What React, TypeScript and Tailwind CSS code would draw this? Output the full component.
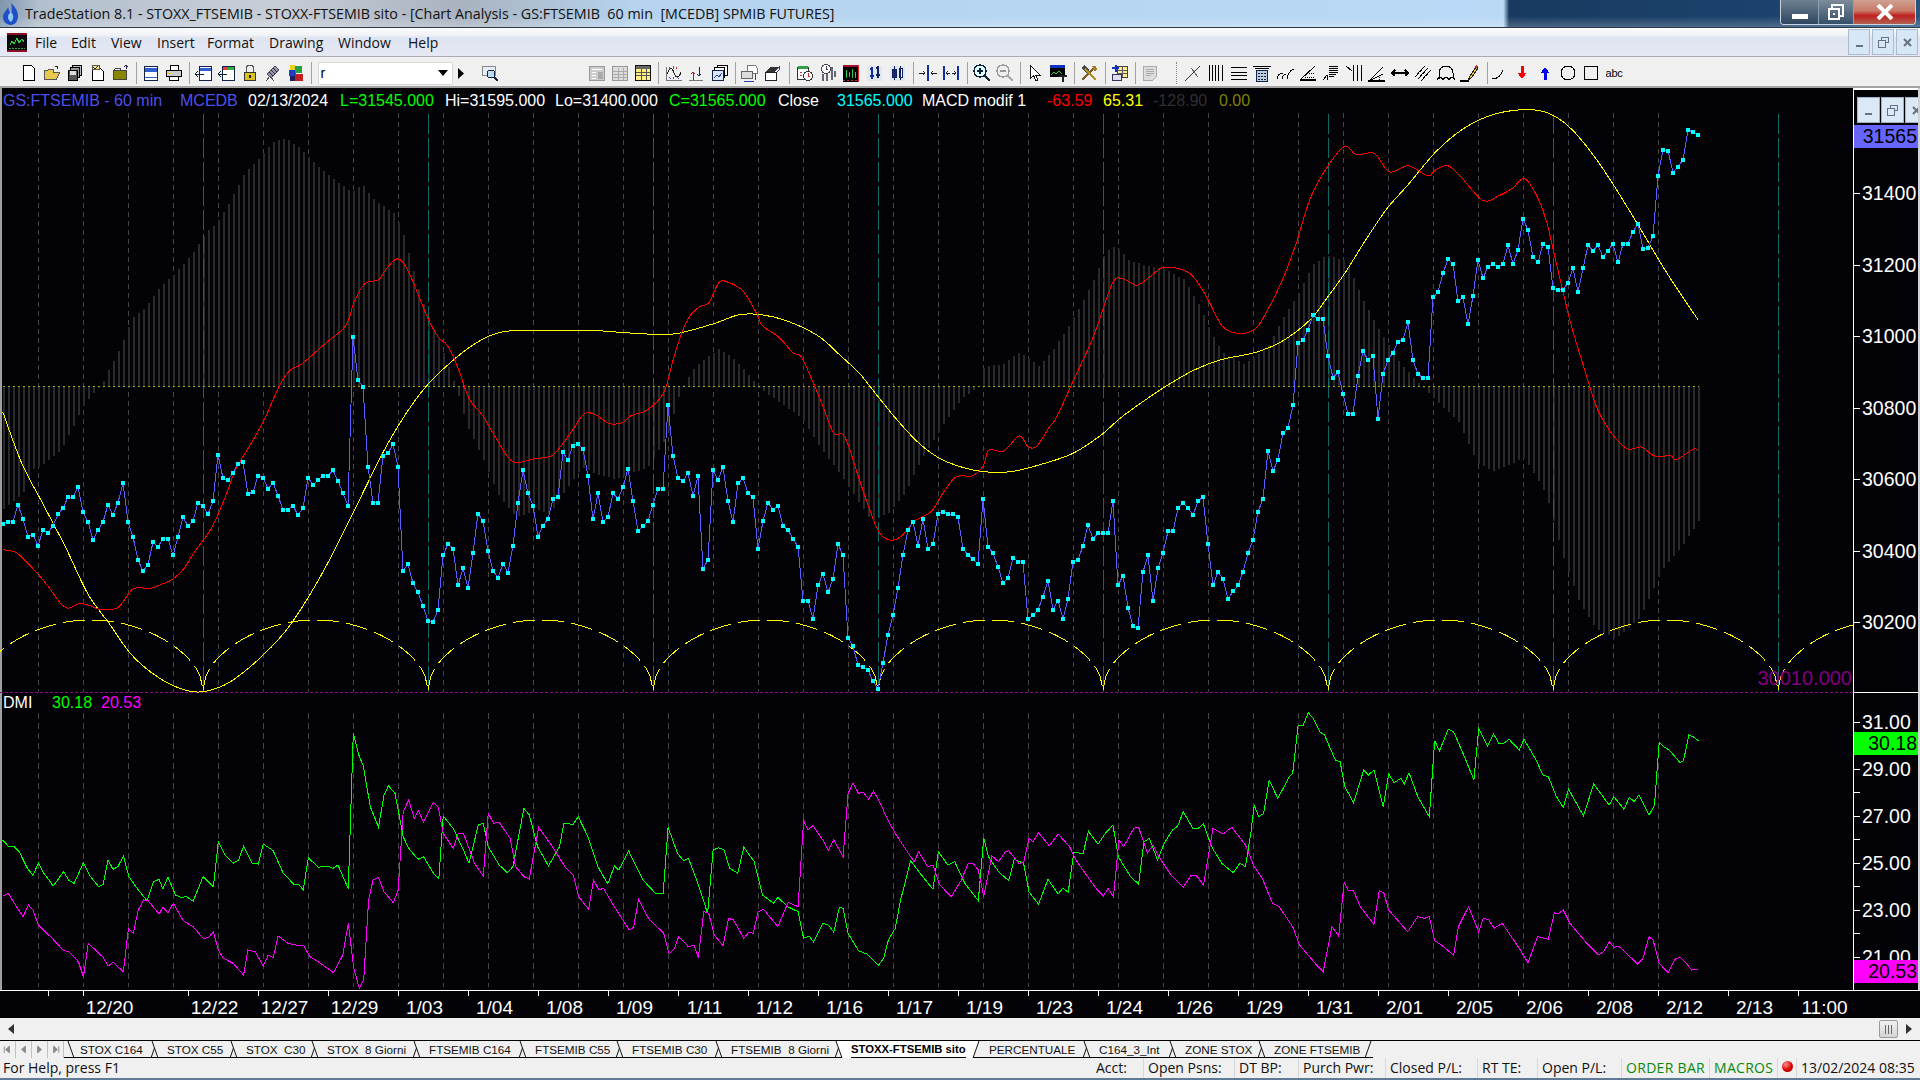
import React from 'react';

// flat [zoomX, zoomY, ...] readings -> real chart pixels
const map = (flat: number[], ox: number, sx: number, oy: number, sy: number) => {
  const out: [number, number][] = [];
  for (let i = 0; i < flat.length; i += 2) out.push([ox + flat[i] / sx, oy + flat[i + 1] / sy]);
  return out;
};
const A = (f: number[]) => map(f, 0, 1.823, 100, 2.613);
const B = (f: number[]) => map(f, 860, 1.823, 100, 2.613);
const C = (f: number[]) => map(f, 0, 1.823, 690, 3);
const D = (f: number[]) => map(f, 860, 1.479, 690, 3);

const priceY = [1107,1103,1102,1057,1095,1141,1136,1165,1124,1132,1112,1083,1066,1038,1037,1011,1076,1102,1150,1124,1103,1057,1084,1052,1000,1102,1141,1202,1231,1214,1155,1167,1146,1146,1190,1142,1090,1113,1100,1052,1061,1082,1048,927,988,993,975,950,946,1030,1024,983,987,1016,1000,1034,1071,1071,1060,1085,1066,987,1006,992,983,982,968,995,1028,1060,619,732,750,958,1052,1052,930,922,900,958,1231,1212,1263,1286,1322,1361,1364,1332,1190,1160,1172,1268,1224,1275,1183,1081,1100,1178,1230,1249,1212,1235,1165,1052,968,1028,1060,1141,1112,1095,1042,1037,921,940,903,899,912,983,1095,1028,1103,1090,1028,1042,1012,963,1048,1127,1112,1100,1057,1016,1016,798,930,988,995,975,1034,983,1225,1202,968,993,959,1048,1103,1002,988,1028,1038,1173,1100,1052,1071,1060,1112,1124,1146,1167,1308,1308,1356,1268,1238,1286,1252,1160,1190,1405,1427,1476,
  1482,1490,1518,1540,1471,1397,1346,1275,1188,1124,1102,1165,1095,1173,1160,1082,1076,1081,1083,1090,1173,1188,1200,1212,1042,1167,1184,1220,1262,1249,1196,1207,1207,1357,1346,1332,1298,1256,1332,1308,1356,1303,1207,1202,1165,1111,1146,1132,1132,1132,1047,1268,1243,1327,1375,1380,1233,1190,1310,1224,1183,1127,1127,1066,1052,1066,1085,1048,1038,1160,1268,1233,1252,1304,1284,1268,1233,1184,1150,1076,1042,916,970,940,870,856,798,636,627,600,562,572,572,670,726,712,768,820,820,722,655,680,670,833,716,680,660,632,626,581,680,716,726,726,516,502,452,416,428,525,516,586,512,418,465,436,428,436,428,380,428,392,310,340,410,424,376,384,492,496,496,478,440,502,440,380,394,380,410,394,376,424,376,376,344,324,390,386,356,198,130,132,190,174,156,78,84,91];
const price = priceY.map((y, i): [number, number] => [3 + 5 * i, 100 + y / 2.613]);

const red = [...A([5,1175,30,1183,50,1210,70,1240,90,1275,110,1315,125,1328,145,1316,165,1322,185,1332,215,1326,240,1280,255,1275,275,1276,295,1265,315,1252,335,1225,355,1180,385,1120,410,1040,430,965,465,880,485,825,510,745,530,705,550,690,590,640,630,590,645,530,665,480,690,470,705,440,725,415,745,450,780,570,800,622,815,640,835,700,855,780,880,825,905,885,935,945,975,937,1005,930,1025,900,1045,860,1065,820,1085,822,1110,845,1135,843,1150,825,1180,810,1210,765,1225,690,1240,620,1255,570,1275,540,1292,530,1310,478,1325,475,1355,500,1380,560,1390,590,1420,620,1445,660,1460,670,1480,730,1500,800,1520,870,1540,880,1565,985]),
  ...B([15,1060,35,1130,55,1150,75,1140,100,1100,130,1075,150,1030,175,985,205,982,225,955,235,915,262,917,290,878,306,905,322,905,345,855,358,830,390,730,425,620,460,480,480,468,505,484,530,460,555,437,600,452,630,510,660,590,690,610,718,600,735,570,770,470,795,375,820,260,845,190,882,122,905,143,938,140,965,188,1000,172,1035,198,1050,182,1072,172,1095,200,1135,262,1165,250,1190,230,1210,205,1230,240,1250,310,1270,430,1295,580,1320,700,1345,810,1375,880,1400,912,1425,907,1448,930,1478,930,1488,940,1520,912,1528,918])];

const slow = [...A([5,815,40,950,80,1060,120,1170,160,1290,200,1370,240,1450,290,1510,340,1543,375,1545,420,1520,480,1450,530,1370,590,1230,650,1060,710,890,770,760,830,675,880,625,920,605,980,602,1075,602,1140,608,1190,612,1235,610,1300,585,1345,562,1380,560,1430,575,1490,615,1530,665]),
  ...B([0,716,30,770,70,840,110,900,150,940,200,965,240,973,280,970,340,948,390,922,440,875,480,825,550,755,610,705,660,678,720,660,770,630,820,575,850,520,885,450,920,370,960,285,1000,220,1050,135,1100,75,1150,40,1200,26,1240,28,1270,45,1300,80,1340,150,1375,225,1420,330,1470,450,1528,575])];

const envelope = [...A([5,1070,40,1030,60,965,80,950,110,915,130,860,150,800,170,765,185,745,190,725,205,685,225,625,240,570,265,540,290,490,320,450,350,400,375,345,395,320,420,260,445,190,470,155,500,105,520,100,545,125,580,175,610,210,640,240,660,220,680,260,720,300,735,355,760,485,780,570,800,630,820,710,830,750,850,850,880,940,910,1040,940,1090,980,1070,1000,1082,1030,1020,1060,960,1090,980,1120,990,1150,975,1180,960,1215,880,1235,780,1245,745,1265,700,1290,670,1310,650,1340,680,1365,720,1380,750,1420,790,1460,830,1500,920,1525,965]),
  ...B([20,1100,50,1080,80,1030,110,940,150,850,185,780,215,748,225,695,260,690,290,658,325,695,350,655,375,600,400,540,425,470,445,400,465,380,490,420,520,432,560,445,590,470,615,530,640,610,660,660,700,690,740,650,770,570,800,500,825,430,850,405,885,420,915,520,945,600,980,680,1010,730,1025,750,1060,800,1090,840,1125,950,1155,970,1210,935,1250,1030,1280,1190,1310,1310,1340,1380,1375,1408,1420,1355,1460,1230,1500,1160,1528,1100])];

const dmiGreen = [...C([5,450,15,468,25,468,35,485,50,535,60,556,70,520,80,550,97,588,116,545,125,570,135,580,152,518,165,560,180,590,188,583,197,510,206,538,215,530,225,498,235,560,250,595,268,632,280,575,290,568,297,597,306,562,320,615,330,622,340,620,352,634,370,560,389,590,398,455,410,495,425,520,435,510,444,468,460,520,471,522,480,462,498,482,516,548,535,582,545,584,553,600,562,503,580,532,598,528,607,535,616,525,635,596,644,130,655,200,662,225,675,350,690,412,700,315,708,287,720,310,735,440,745,475,762,508,772,500,790,550,800,567,808,378,826,415,845,480,855,520,872,405,881,400,890,470,910,525,925,548,935,530,955,355,965,375,980,470,1000,528,1020,470,1028,400,1045,403,1054,380,1072,440,1090,530,1108,582,1120,528,1128,540,1146,482,1172,570,1196,612,1209,610,1218,412,1235,490,1246,512,1255,505,1270,570,1290,670,1300,480,1310,473,1320,480,1330,535,1345,550,1356,472,1375,515,1390,615,1410,640,1418,622,1436,650,1455,665,1465,745,1475,738,1483,755,1500,700,1510,705,1520,727,1530,652,1537,655,1546,730,1565,782]),
  ...D([10,792,27,826,35,805,42,750,52,715,60,630,75,512,85,540,108,598,116,485,130,525,140,515,155,580,175,632,183,445,190,500,205,545,220,572,228,508,242,520,250,605,264,643,278,568,293,612,300,595,308,607,316,488,330,490,338,424,352,463,362,432,374,405,382,500,400,560,412,582,420,455,428,445,440,510,450,460,462,420,470,408,478,365,492,415,500,415,508,402,520,470,535,520,552,548,562,520,570,530,578,430,583,347,590,380,597,370,605,270,618,325,635,260,640,250,648,105,655,108,663,68,670,85,680,125,687,135,703,210,710,215,717,290,730,338,745,240,752,255,760,240,774,350,782,252,790,278,800,265,805,282,812,248,825,320,842,380,850,152,857,183,870,118,878,125,895,205,908,270,915,115,928,168,937,132,945,160,952,160,960,148,975,180,982,148,1000,210,1010,255,1018,260,1030,320,1040,352,1048,298,1070,378,1085,282,1108,345,1115,320,1130,358,1138,322,1145,335,1152,315,1167,376,1175,345,1182,157,1190,172,1197,180,1213,218,1218,212,1226,135,1232,140,1240,152])];

const dmiMagenta = [...C([5,618,15,610,30,650,42,680,52,645,60,660,70,705,95,745,115,780,125,785,143,815,152,860,161,760,188,802,197,828,206,817,225,845,234,715,243,730,252,660,262,630,270,632,290,672,297,652,306,668,316,640,334,692,352,710,370,745,380,743,389,725,398,780,407,805,425,820,444,855,452,780,465,785,480,828,489,795,498,803,507,738,525,760,540,765,553,765,565,800,580,815,608,848,625,795,635,700,645,835,655,895,663,870,672,630,680,570,690,562,700,605,717,638,726,600,735,365,745,330,755,385,763,362,772,397,790,337,799,352,808,430,826,475,835,432,845,430,865,520,881,558,890,370,900,400,910,397,930,445,940,530,955,560,965,567,982,412,1005,465,1030,530,1045,555,1055,620,1073,658,1082,570,1092,600,1100,595,1120,650,1147,720,1155,712,1164,628,1182,685,1210,730,1220,792,1230,775,1237,740,1255,770,1265,765,1273,803,1283,665,1292,670,1302,735,1318,767,1328,685,1337,690,1356,745,1365,727,1373,730,1382,665,1392,658,1418,710,1437,637,1455,650,1465,392,1473,420,1482,407,1500,450,1510,480,1520,450,1537,500,1546,310,1555,280,1565,310]),
  ...D([5,307,13,328,20,303,30,340,40,385,52,430,65,470,80,515,87,485,100,530,108,525,118,585,135,620,150,570,160,520,168,522,175,540,183,620,195,497,205,515,215,485,220,482,235,520,242,518,250,445,256,455,264,428,280,467,293,432,310,470,320,512,340,570,350,597,360,618,367,595,375,620,383,450,390,470,405,415,412,412,425,490,433,465,445,510,460,555,478,592,490,555,497,555,508,585,522,415,537,432,550,412,570,465,583,530,595,565,610,640,620,650,640,710,650,765,665,800,675,825,685,845,698,710,708,738,716,578,722,600,730,602,740,650,760,703,768,602,775,610,782,660,810,725,825,680,835,685,842,680,850,752,860,765,878,796,885,710,900,650,915,725,922,685,930,690,938,715,950,700,975,775,988,818,1002,740,1018,748,1027,668,1032,672,1040,660,1050,700,1075,760,1092,795,1100,785,1108,755,1115,772,1122,768,1150,822,1158,805,1167,740,1173,750,1182,820,1195,848,1205,808,1213,802,1220,815,1230,840,1240,838])];

const line = (p: [number, number][]) => p.map(([x, y]) => `${x.toFixed(1)},${y.toFixed(1)}`).join(' ');

const smooth = (p: [number, number][]) => {
  let d = `M${p[0][0]} ${p[0][1]}`;
  for (let i = 0; i < p.length - 1; i++) {
    const a = p[Math.max(i - 1, 0)], b = p[i], c = p[i + 1], e = p[Math.min(i + 2, p.length - 1)];
    d += `C${b[0] + (c[0] - a[0]) / 6} ${b[1] + (c[1] - a[1]) / 6} ${c[0] - (e[0] - b[0]) / 6} ${c[1] - (e[1] - b[1]) / 6} ${c[0]} ${c[1]}`;
  }
  return d;
};

const envAt = (x: number) => {
  for (let i = 0; i < envelope.length - 1; i++) {
    const [x0, y0] = envelope[i], [x1, y1] = envelope[i + 1];
    if (x >= x0 && x <= x1) return y0 + ((y1 - y0) * (x - x0)) / (x1 - x0 || 1);
  }
  return envelope[envelope.length - 1][1];
};

const arcPath = () => {
  let d = '';
  for (let k = -1; k < 8; k++) {
    const x0 = 203 + 225 * k;
    for (let s = 0; s <= 225; s += 3) {
      const y = 690 - 70 * Math.sqrt(Math.sin((Math.PI * s) / 225));
      d += `${s === 0 ? 'M' : 'L'}${x0 + s} ${y.toFixed(1)}`;
    }
  }
  return d;
};

const gridX = Array.from({ length: 37 }, (_, i) => 38 + 45 * i);
const teal = Array.from({ length: 8 }, (_, i) => 203 + 225 * i);
const histX = Array.from({ length: 340 }, (_, i) => 3 + 5 * i);

const Chart = () => (
  <svg className="block" width="1853" height="902" viewBox="0 88 1853 902" fill="none" shapeRendering="crispEdges">
    <rect x="0" y="88" width="2" height="902" fill="#a0a0a0" />
    {gridX.map(x => (
      <g key={x} stroke="#444444">
        <path d={`M${x}.5 113V692`} strokeDasharray="5 4" />
        <path d={`M${x}.5 713V987`} strokeDasharray="6 4" />
      </g>
    ))}
    {histX.map(x => {
      const y = envAt(x);
      return <rect key={x} x={x} y={Math.min(y, 386)} width="2" height={Math.abs(y - 386)} fill="#2a2a2a" />;
    })}
    {teal.map(x => <path key={x} d={`M${x}.5 114V692`} stroke="#0b6b66" strokeDasharray="20 4" />)}
    <path d="M3 386.5H1699" stroke="#a8a800" strokeDasharray="2 3" />
    <path d="M0 692.5H1853" stroke="#8a0a8a" strokeDasharray="3 2" />
    <path d={arcPath()} stroke="#ffff00" strokeDasharray="22 7" />
    <path d={smooth(slow)} stroke="#ffff00" />
    <path d={smooth(red)} stroke="#ff0000" />
    <polyline points={line(price)} stroke="#5c5cff" />
    {price.map(([x, y], i) => <rect key={i} x={x - 2} y={y - 2} width="4" height="4" fill="#00ffff" />)}
    <polyline points={line(dmiGreen)} stroke="#00ff00" />
    <polyline points={line(dmiMagenta)} stroke="#ff00ff" />
  </svg>
);

const Legend = () => (
  <div className="absolute left-[3px] top-[4px] flex text-[16px] leading-[18px] whitespace-pre">
    <span className="w-[177px] text-[#5050e8]">GS:FTSEMIB - 60 min</span>
    <span className="w-[68px] text-[#5050e8]">MCEDB</span>
    <span className="w-[92px] text-white">02/13/2024</span>
    <span className="w-[105px] text-[#00ff00]">L=31545.000</span>
    <span className="w-[110px] text-white">Hi=31595.000</span>
    <span className="w-[114px] text-white">Lo=31400.000</span>
    <span className="w-[109px] text-[#00ff00]">C=31565.000</span>
    <span className="w-[59px] text-white">Close</span>
    <span className="w-[85px] text-[#00ffff]">31565.000</span>
    <span className="w-[125px] text-white">MACD modif 1</span>
    <span className="w-[56px] text-[#ff0000]">-63.59</span>
    <span className="w-[50px] text-[#ffff00]">65.31</span>
    <span className="w-[66px] text-[#303030]">-128.90</span>
    <span className="text-[#808000]">0.00</span>
  </div>
);

const ChartBtn = ({ children }: { children: React.ReactNode }) => (
  <div className="flex h-[26px] w-[23px] shrink-0 items-center justify-center border border-[#9fb4c8] bg-[#dbe8f5] text-[#4a5a6a]">
    {children}
  </div>
);

const MinGlyph = () => <div className="mt-[8px] h-[2px] w-[7px] bg-[#66727f]" />;
const RestoreGlyph = () => (
  <svg width="11" height="11" viewBox="0 0 11 11" fill="none" stroke="#66727f" shapeRendering="crispEdges">
    <path d="M3.5 3V.5h7v5H8M.5 3.5h7v7h-7z" />
  </svg>
);
const CloseGlyph = () => (
  <svg width="9" height="9" viewBox="0 0 9 9" stroke="#66727f" strokeWidth="2">
    <path d="M1 1l7 7M8 1L1 8" />
  </svg>
);

const PriceRow = ({ v }: { v: string }) => (
  <div className="flex h-[71.5px] items-center">
    <div className="h-px w-[6px] bg-white" />
    <span className="ml-[2px]">{v}</span>
  </div>
);

const DmiRow = ({ v }: { v: string }) => (
  <div className="relative flex h-[47px] items-center">
    <div className="h-px w-[6px] bg-white" />
    <span className="ml-[2px]">{v}</span>
    <div className="absolute bottom-0 left-0 h-px w-[6px] bg-white" />
  </div>
);

const Axis = () => (
  <div className="relative h-[902px] w-[65px] overflow-hidden border-l border-white text-[19.5px] leading-none text-white">
    <div className="h-[604px]">
      <div className="h-[2px] bg-white" />
      <div className="mt-[7px] flex gap-[1px] pl-[3px]">
        <ChartBtn><MinGlyph /></ChartBtn>
        <ChartBtn><RestoreGlyph /></ChartBtn>
        <ChartBtn><CloseGlyph /></ChartBtn>
      </div>
      <div className="mt-[2px] flex h-[23px] items-center justify-end bg-[#6666ff] pr-[1px] text-black">31565</div>
      <div className="mt-[10px]">
        {['31400', '31200', '31000', '30800', '30600', '30400', '30200'].map(v => <PriceRow key={v} v={v} />)}
      </div>
    </div>
    <div className="h-[298px] border-t border-white">
      <div className="mt-[6px]">
        {['31.00', '29.00', '27.00', '25.00', '23.00', '21.00'].map(v => <DmiRow key={v} v={v} />)}
      </div>
    </div>
    <div className="absolute left-0 right-0 top-[644px] flex h-[23px] items-center justify-end bg-[#00ff00] pr-[1px] text-black">30.18</div>
    <div className="absolute left-0 right-0 top-[872px] flex h-[23px] items-center justify-end bg-[#ff00ff] pr-[1px] text-black">20.53</div>
  </div>
);

const DATES = ['12/22', '12/27', '12/29', '1/03', '1/04', '1/08', '1/09', '1/11', '1/12', '1/16', '1/17', '1/19', '1/23', '1/24', '1/26', '1/29', '1/31', '2/01', '2/05', '2/06', '2/08', '2/12', '2/13', '11:00'];

const DateCell = ({ d, w }: { d: string; w: string }) => (
  <div className={w}>
    <div className="h-[5px] w-px bg-white" />
    <div className="mt-[2px] w-[53px] text-center">{d}</div>
  </div>
);

const DateAxis = () => (
  <div className="flex h-[28px] border-t border-white bg-[#020207] text-[19px] leading-[19px] text-white">
    <div className="ml-[48px] w-[35px]"><div className="h-[5px] w-px bg-white" /></div>
    <DateCell d="12/20" w="w-[105px]" />
    {DATES.map(d => <DateCell key={d} d={d} w="w-[70px]" />)}
  </div>
);

/* toolbar icons */
const Ico = ({ children }: { children: React.ReactNode }) => (
  <svg width="20" height="20" viewBox="0 0 20 20" fill="none" stroke="#000" shapeRendering="crispEdges">{children}</svg>
);
const Cell = ({ children }: { children: React.ReactNode }) => (
  <div className="flex h-[23px] w-[23px] shrink-0 items-center justify-center">{children}</div>
);
const Sep = ({ className }: { className: string }) => (
  <div className={`h-[22px] w-px shrink-0 bg-[#a0a0a0] ${className}`} />
);

const tb: Record<string, React.ReactNode> = {
  doc: <path d="M4.5 2.5h8l3 3v12h-11z" fill="#fff" />,
  open: <><path d="M2.5 16.5v-9h3l1-1h5v3h6l-3 7z" fill="#e8c84a" stroke="#555" /><path d="M13 3c2 0 3 1 3 3" stroke="#222" /></>,
  stack: <><path d="M7.5 2.5h9v10h-9z" fill="#bbb" /><path d="M5.5 4.5h9v10h-9z" fill="#999" /><path d="M3.5 7.5h9v10h-9z" fill="#555" /><path d="M5 8h6v4H5z" fill="#ddd" stroke="none" /></>,
  check: <><path d="M4.5 5.5h8l3 3v9h-11z" fill="#fff" /><path d="M4 2.5h7v4H4z" fill="#ffe680" stroke="#555" /><path d="M5 4l2 2 3-3" stroke="#222" /></>,
  folder: <><path d="M2.5 16.5v-9h13v9z" fill="#8a8600" stroke="#444" /><path d="M3 7l2-2h4l1 2" stroke="#444" /><path d="M15 6V2m-2 2l2-2 2 2" stroke="#224" /></>,
  win: <><path d="M3.5 3.5h13v14h-13z" fill="#fff" stroke="#124" /><path d="M4 5h12v4H4z" fill="#2f5fd0" stroke="none" /><path d="M4 14h12" stroke="#2f5fd0" /></>,
  print: <><path d="M6.5 2.5h8v5h-8z" fill="#fff" /><path d="M2.5 7.5h15v6h-15z" fill="#ccc" /><path d="M5.5 13.5h9v4h-9z" fill="#fff" /><path d="M4 10h3" stroke="#f0c000" /></>,
  tabBack: <><path d="M5.5 3.5h12v14h-12z" fill="#fff" stroke="#124" /><path d="M6 5h11v3H6z" fill="#2f5fd0" stroke="none" /><path d="M1 11h9M4 8l-3 3 3 3" stroke="#124" /></>,
  tabBack2: <><path d="M5.5 3.5h12v14h-12z" fill="#fff" stroke="#124" /><path d="M6 4h5v3H6z" fill="#e04040" stroke="none" /><path d="M11 4h6v3h-6z" fill="#30b040" stroke="none" /><path d="M1 11h9M4 8l-3 3 3 3" stroke="#124" /></>,
  lock: <><path d="M6.5 9V5.5a3.5 3.5 0 0 1 7 0V9" stroke="#555" /><path d="M4.5 9.5h11v8h-11z" fill="#d8c020" stroke="#333" /><path d="M9 12h2v3H9z" fill="#222" stroke="none" /></>,
  dish: <><path d="M4 11l8-8 4 4-8 8z" fill="#99a" stroke="#446" /><path d="M6 9l4 4M8 7l4 4M10 5l4 4" stroke="#224" /><path d="M3 18l4-5 4 5" stroke="#555" /></>,
  cubes: <><path d="M3 7h7v6H3z" fill="#2040c0" stroke="none" /><path d="M9 3h7v7H9z" fill="#20a040" stroke="none" /><path d="M9 11h8v7H9z" fill="#c02020" stroke="none" /><path d="M4 2h5v5H4z" fill="#e8d020" stroke="none" /><path d="M4 13h5v5H4z" fill="#202060" stroke="none" /></>,
  find: <><path d="M2.5 3.5h13v9h-13z" fill="#e8eef8" stroke="#888" /><circle cx="11" cy="11" r="4" fill="#bde" stroke="#124" /><path d="M14 14l4 4" strokeWidth="2" stroke="#124" /></>,
  gDollar: <><path d="M2.5 3.5h15v14h-15z" fill="#ccc" stroke="#999" /><path d="M5 6h10M5 9h4M5 12h4M5 15h4" stroke="#fff" /><path d="M11 9h5v7h-5z" fill="#aaa" stroke="none" /></>,
  gTable: <><path d="M2.5 3.5h15v14h-15z" fill="#ddd" stroke="#999" /><path d="M3 8h14M3 11h14M3 14h14M8 5v12M13 5v12" stroke="#aaa" /></>,
  yTable: <><path d="M2.5 2.5h15v15h-15z" fill="#ffee80" stroke="#111" /><path d="M3 3h14v3H3z" fill="#666" stroke="none" /><path d="M3 9h14M3 12h14M8 6v11M13 6v11" stroke="#555" /></>,
  wave: <><path d="M2.5 3.5v14h15" stroke="#777" /><path d="M3 11c3-7 5-7 7-1s5 5 7-1" stroke="#222" /><path d="M5 4l1 2M9 3v3M13 4l-1 2" stroke="#d03030" /><path d="M5 14l2 2M9 14v2M13 14l2 2" stroke="#3050c0" /></>,
  arrows: <><path d="M6 17V9M4 11l2-2 2 2" stroke="#a02020" /><path d="M12 4v9M10 11l2 2 2-2" stroke="#202060" /><path d="M2 17h14" stroke="#777" /></>,
  stackChart: <><path d="M7.5 2.5h10v10h-10z" fill="#fff" /><path d="M4.5 4.5h10v10h-10z" fill="#fff" /><path d="M2.5 7.5h11v10h-11z" fill="#dde6ff" stroke="#124" /><path d="M4 15l3-3 2 2 3-4" stroke="#2040b0" /></>,
  printChart: <><path d="M7.5 2.5h8l2 3v5h-10z" fill="#fff" stroke="#777" /><path d="M1.5 8.5h11v7h-11z" fill="#ddd" stroke="#666" /><path d="M4 18h10" stroke="#2040b0" /><path d="M15 11v6" stroke="#2040b0" /></>,
  house: <><path d="M2.5 9.5h11v8h-11z" fill="#fff" stroke="#222" /><path d="M2 9l5-5h9l-4 5z" fill="#333" stroke="none" /><path d="M16 3c1 2 1 4-2 6" stroke="#2040b0" /></>,
  cal: <><path d="M2.5 4.5h11v12h-11z" fill="#fff" stroke="#333" /><path d="M3 3h10v3H3z" fill="#30a040" stroke="none" /><circle cx="13" cy="13" r="4.5" fill="#fff" stroke="#333" /><path d="M13 10v3h2" stroke="#c03030" /><path d="M5 9h2M5 12h2" stroke="#c03030" /></>,
  clock: <><circle cx="8" cy="6" r="4.5" fill="#fff" stroke="#445" /><path d="M8 3v3h2" stroke="#445" /><path d="M5 11v7M9 11v7M14 4v13M17 8v6" stroke="#667" strokeWidth="2" /></>,
  darkChart: <><path d="M2 2h16v17H2z" fill="#000" stroke="none" /><path d="M2 2h16v2H2z" fill="#a0102a" stroke="none" /><path d="M17 2h1v17h-1z" fill="#e02020" stroke="none" /><path d="M5 7v8M8 9v5M11 6v9M14 9v6" stroke="#20d040" /><path d="M2 17h16" stroke="#d02020" strokeDasharray="2 2" /></>,
  bluBars: <><path d="M3 3h15v15H3z" fill="#e2e6ee" stroke="none" /><path d="M8 4v12M6 13h4M6 6h2" stroke="#1030a0" strokeWidth="2" /><path d="M14 3v12M12 12h4M12 5h2" stroke="#102060" strokeWidth="2" /></>,
  candles: <><path d="M3 3h15v15H3z" fill="#e2e6ee" stroke="none" /><path d="M5 6h4v8H5z" fill="#1030a0" stroke="#102060" /><path d="M12 5h3v9h-3z" fill="#fff" stroke="#102060" /><path d="M7 3v14M13.5 3v14" stroke="#102060" /></>,
  barIn: <><path d="M10 2v16" stroke="#1030a0" strokeWidth="2" /><path d="M1 10h6M5 8l2 2-2 2M19 10h-6M15 8l-2 2 2 2" stroke="#223" /></>,
  barOut: <><path d="M3 3v14M17 3v14" stroke="#1030a0" strokeWidth="2" /><path d="M5 10h4M7 8l-2 2 2 2M15 10h-4M13 8l2 2-2 2" stroke="#223" /></>,
  zoomIn: <><circle cx="8" cy="8" r="6" fill="#dff" stroke="#123" strokeWidth="1.5" /><path d="M5 8h6M8 5v6" stroke="#123" strokeWidth="2" /><path d="M12 12l6 6" stroke="#123" strokeWidth="2.5" /></>,
  zoomOut: <><circle cx="8" cy="8" r="6" fill="#eee" stroke="#999" strokeWidth="1.5" /><path d="M5 8h6" stroke="#999" strokeWidth="2" /><path d="M12 12l6 6" stroke="#aaa" strokeWidth="2.5" /></>,
  cursor: <path d="M5.5 2.5v13l3-3 2.5 5.5 2-1-2.5-5h4.5z" fill="#fff" stroke="#111" />,
  chartT: <><path d="M2 2h15v12H2z" fill="#000" stroke="none" /><path d="M2 2h15v3H2z" fill="#1030c0" stroke="none" /><path d="M3 12l3-3 2 2 3-3 3 3" stroke="#30d040" /><path d="M11 12h8v2h-3v5h-2v-5h-3z" fill="#222" stroke="none" /></>,
  tools: <><path d="M3 17L15 5" stroke="#7a5a20" strokeWidth="2" /><path d="M2 5l3-3 5 5-3 3z" fill="#444" stroke="none" /><path d="M17 17L6 6" stroke="#b09020" strokeWidth="2" /><path d="M13 3l4 0 1 4-3 1z" fill="#aa7a20" stroke="none" /></>,
  plusT: <><path d="M7.5 3.5h10v11h-10z" fill="#ffee80" stroke="#444" /><path d="M8 7h9M8 10h9M12 4v10" stroke="#556" /><path d="M2 5h7M5.5 1.5v7" stroke="#1030c0" strokeWidth="2" /><path d="M2.5 11.5h9v6h-9z" fill="#dde" stroke="#335" /></>,
  note: <><path d="M3.5 3.5h13v10l-4 4H3.5z" fill="#ddd" stroke="#aaa" /><path d="M6 6h8M6 8h8M6 10h8M6 12h5" stroke="#aaa" /></>,
  trend: <><path d="M2 18L17 3" stroke="#333" /><path d="M8 5l7 9" stroke="#666" /></>,
  vlines: <path d="M3.5 2v16M6.5 2v16M9.5 2v16M12.5 2v16M16.5 2v16" />,
  hlines: <path d="M2 4.5h16M2 9.5h16M2 12.5h16M2 16.5h16" />,
  calc: <><path d="M1 3.5h18" /><path d="M3 5.5h14" /><path d="M4.5 7.5h11v11h-11z" fill="#bcd" stroke="#124" /><path d="M6 10h8M6 13h8M6 16h8" stroke="#124" strokeDasharray="2 1" /></>,
  arc: <><path d="M2 16c0-4 3-6 6-6M7 16c0-3 2-5 4-5M12 16c0-4 3-9 7-10" /></>,
  fib: <><path d="M2 17L17 3" /><path d="M2 17h16" strokeWidth="2" /><path d="M7 14h10M11 10h6" strokeDasharray="1 1" /></>,
  sq: <><path d="M2 17l4-5 1 5" /><path d="M8 3h9M8 5h9M8 7h9M8 9h9M8 11h7M8 13h5" /></>,
  lines2: <path d="M2 3l6 5M9.5 2v16M13.5 2v16M17.5 2v16" />,
  angle: <><path d="M1 18h17" strokeWidth="2" /><path d="M2 18L16 4M2 18l14-7" /><path d="M12 12v5" strokeDasharray="1 1" /></>,
  dbl: <path d="M2 10h16M5 7l-3 3 3 3M15 7l3 3-3 3" strokeWidth="1.5" />,
  para: <path d="M2 14L12 3M5 16L15 5M8 18L18 7" strokeDasharray="6 1" />,
  gann: <><path d="M3 16v-6a7 7 0 0 1 14 0v6" /><path d="M1 17c2-4 4-4 6 0M7 17c2-4 4-4 6 0M13 17c2-4 4-4 6 0" /></>,
  pencil: <><path d="M1 18h9" strokeWidth="2" /><path d="M9 18l2-5 6-9 2 1-6 9z" fill="#e8d030" stroke="#222" /><path d="M16 4l1-2 2 1-1 2z" fill="#c03030" stroke="none" /></>,
  curve: <path d="M3 16c6 0 9-3 11-9" />,
  down: <><path d="M8.5 3h3v7h3l-4.5 6-4.5-6h3z" fill="#ff0000" stroke="none" /></>,
  up: <><path d="M8.5 17h3v-7h3l-4.5-6-4.5 6h3z" fill="#0000ee" stroke="none" /></>,
  circle: <circle cx="10" cy="10" r="7" />,
  square: <path d="M3.5 3.5h13v13h-13z" />,
};

const T = ({ n }: { n: string }) => <Cell><Ico>{tb[n]}</Ico></Cell>;

const Toolbar = () => (
  <div className="flex h-[31px] items-center border-b-2 border-[#a4a4a4] bg-[#f0f0f0] pl-[17.5px] pt-[3px] text-[12px] text-black">
    {['doc', 'open', 'stack', 'check', 'folder'].map(n => <T key={n} n={n} />)}
    <Sep className="mx-[3px]" />
    {['win', 'print'].map(n => <T key={n} n={n} />)}
    <Sep className="mx-[3px]" />
    {['tabBack', 'tabBack2', 'lock', 'dish', 'cubes'].map(n => <T key={n} n={n} />)}
    <Sep className="mx-[3px]" />
    <div className="ml-[3px] flex h-[23px] w-[135px] shrink-0 items-center justify-between rounded-[2px] border border-[#d8d8d8] bg-white pl-[2px] pr-[4px] text-[14px]">
      r
      <svg width="10" height="6" viewBox="0 0 10 6"><path d="M0 0h10L5 6z" fill="#000" /></svg>
    </div>
    <svg className="ml-[5px] shrink-0" width="6" height="11" viewBox="0 0 6 11"><path d="M0 0l6 5.5L0 11z" fill="#000" /></svg>
    <div className="ml-[15px]"><T n="find" /></div>
    <div className="ml-[84px]" />
    {['gDollar', 'gTable', 'yTable'].map(n => <T key={n} n={n} />)}
    <Sep className="mx-[3px]" />
    <div className="w-[1px]" />
    {['wave', 'arrows', 'stackChart'].map(n => <T key={n} n={n} />)}
    <Sep className="mx-[3px]" />
    {['printChart', 'house'].map(n => <T key={n} n={n} />)}
    <Sep className="ml-[4px] mr-[4px]" />
    {['cal', 'clock', 'darkChart', 'bluBars', 'candles'].map(n => <T key={n} n={n} />)}
    <Sep className="ml-[4px] mr-[3px]" />
    {['barIn', 'barOut'].map(n => <T key={n} n={n} />)}
    <Sep className="ml-[4px] mr-[3px]" />
    {['zoomIn', 'zoomOut'].map(n => <T key={n} n={n} />)}
    <Sep className="mx-[3px]" />
    {['cursor', 'chartT'].map(n => <T key={n} n={n} />)}
    <Sep className="ml-[4px] mr-[3px]" />
    <T n="tools" />
    <Sep className="ml-[4px] mr-[3px]" />
    <T n="plusT" />
    <Sep className="ml-[3px] mr-[3px]" />
    <T n="note" />
    <div className="ml-[14px] mr-[5px] h-[22px] shrink-0 border-l border-dotted border-[#888]" />
    {['trend', 'vlines', 'hlines', 'calc', 'arc', 'fib', 'sq', 'lines2', 'angle', 'dbl', 'para', 'gann', 'pencil'].map(n => <T key={n} n={n} />)}
    <Sep className="ml-[6px]" />
    {['curve', 'down', 'up', 'circle', 'square'].map(n => <T key={n} n={n} />)}
    <Cell><span className="font-['Liberation_Sans',sans-serif] text-[11px] tracking-[-0.3px]">abc</span></Cell>
  </div>
);

const TitleBar = () => (
  <div className="flex h-[28px] border-b border-[#2c3a48] bg-[linear-gradient(180deg,rgba(255,255,255,0)_60%,rgba(255,255,255,0.22)_100%),linear-gradient(90deg,#7f96ad_0%,#b2bfcd_2%,#c8ced8_14%,#a9b3c0_24%,#b5d3ee_33%,#b9d9f6_78%,#bcdaf5_78.3%,#183a60_78.6%,#1c426c_92%,#2a5480_100%)]">
    <svg className="ml-[3px] mt-[3px]" width="16" height="22" viewBox="0 0 16 22">
      <path d="M8 0c3 3 7 7 7 13 0 5-3 9-7 9s-8-3-8-8C0 9 4 8 5 4c1 3 1 5 3 7 1-3 1-7 0-11z" fill="#1f4fc8" />
      <path d="M8 9c3 3 3 7 0 10-3-2-4-5-2-8z" fill="#8fc8f4" />
    </svg>
    <div className="ml-[6px] whitespace-pre font-['Open_Sans',sans-serif] text-[14.3px] leading-[28px] text-[#111]">
      TradeStation 8.1 - STOXX_FTSEMIB - STOXX-FTSEMIB sito - [Chart Analysis - GS:FTSEMIB  60 min  [MCEDB] SPMIB FUTURES]
    </div>
    <div className="ml-auto mr-[4px] flex h-[25px] w-[136px] overflow-hidden rounded-b-[4px] border border-t-0 border-[#c8d4e0]">
      <div className="flex w-[38px] items-center justify-center border-r border-[#8fa0b0] bg-[linear-gradient(180deg,#6d8090,#2e4660)]">
        <div className="mt-[8px] h-[5px] w-[16px] bg-white" />
      </div>
      <div className="flex w-[35px] items-center justify-center border-r border-[#8fa0b0] bg-[linear-gradient(180deg,#7c8c9c,#36506a)]">
        <svg width="16" height="16" viewBox="0 0 16 16" fill="none" stroke="#fff" strokeWidth="2">
          <path d="M4 4V1h11v11h-3" />
          <path d="M1 5h10v10H1z" />
          <path d="M5 9h2v2H5z" fill="#fff" stroke="none" />
        </svg>
      </div>
      <div className="flex flex-1 items-center justify-center bg-[linear-gradient(180deg,#d0a090_0%,#c77a68_45%,#c02020_65%,#b06050_100%)]">
        <svg width="18" height="16" viewBox="0 0 18 16" stroke="#fff" strokeWidth="4"><path d="M2 1l14 14M16 1L2 15" /></svg>
      </div>
    </div>
  </div>
);

const MdiBtn = ({ children }: { children: React.ReactNode }) => (
  <div className="flex h-[26px] w-[22px] items-center justify-center border border-[#a8bccc] bg-[#d8e7f6]">{children}</div>
);

const MenuBar = () => (
  <div className="flex h-[29px] items-center border-b border-[#a8aab4] bg-[linear-gradient(180deg,#fbfbfc_0%,#f2f3f6_25%,#dfe4f2_35%,#e6e9f3_100%)] font-['Open_Sans',sans-serif] text-[14px] text-[#111]">
    <svg className="ml-[7px] mr-[8px]" width="20" height="19" viewBox="0 0 20 19" shapeRendering="crispEdges">
      <path d="M0 0h20v19H0z" fill="#0a0a0a" />
      <path d="M0 0h20v2H0zM0 17h20v2H0z" fill="#8a1020" />
      <path d="M3 12l2-4 2 3 3-6 2 5 3-4 2 3" fill="none" stroke="#30d040" />
      <path d="M2 15h16" stroke="#30a040" strokeDasharray="2 1" />
    </svg>
    <span className="w-[36px]">File</span>
    <span className="w-[40px]">Edit</span>
    <span className="w-[46px]">View</span>
    <span className="w-[50px]">Insert</span>
    <span className="w-[62px]">Format</span>
    <span className="w-[69px]">Drawing</span>
    <span className="w-[70px]">Window</span>
    <span>Help</span>
    <div className="ml-auto mr-[2px] flex gap-[2px]">
      <MdiBtn><MinGlyph /></MdiBtn>
      <MdiBtn><RestoreGlyph /></MdiBtn>
      <MdiBtn><CloseGlyph /></MdiBtn>
    </div>
  </div>
);

const ScrollRow = () => (
  <div className="flex h-[22px] items-center bg-[#f0f0f0]">
    <svg className="ml-[8px]" width="6" height="10" viewBox="0 0 6 10"><path d="M6 0v10L0 5z" fill="#333" /></svg>
    <div className="ml-auto flex h-[18px] w-[19px] items-center justify-center rounded-[2px] border border-[#9a9a9a] bg-[linear-gradient(180deg,#f2f2f2,#d4d4d4)]">
      <svg width="9" height="9" viewBox="0 0 9 9" stroke="#666" shapeRendering="crispEdges"><path d="M1.5 0v9M4.5 0v9M7.5 0v9" /></svg>
    </div>
    <svg className="mx-[8px]" width="6" height="10" viewBox="0 0 6 10"><path d="M0 0v10l6-5z" fill="#333" /></svg>
  </div>
);

const NAV = ['M4.5 3v7M10 3v7L6 6.5z', 'M10 3v7L6 6.5z', 'M6 3v7l4-3.5z', 'M6 3v7l4-3.5zM11.5 3v7'];

const TabGap = ({ kind }: { kind: 'plain' | 'toActive' | 'fromActive' }) => (
  <svg className="shrink-0" width="23" height="17" viewBox="0 0 23 17" fill="none" stroke="#111">
    {kind === 'toActive' && <path d="M8 0L14 17H23V0z" fill="#fff" stroke="none" />}
    {kind === 'fromActive' && <path d="M0 0H13L7 17H0z" fill="#fff" stroke="none" />}
    {kind === 'fromActive' ? <path d="M7 17L13 0" /> : <path d="M7 17L10.5 7" />}
    {kind !== 'fromActive' && <path d="M8 0L14 17" />}
  </svg>
);

const TABS: [string, string][] = [
  ['STOX C164', 'w-[64px]'],
  ['STOX C55', 'w-[56px]'],
  ['STOX  C30', 'w-[58px]'],
  ['STOX  8 Giorni', 'w-[79px]'],
  ['FTSEMIB C164', 'w-[83px]'],
  ['FTSEMIB C55', 'w-[74px]'],
  ['FTSEMIB C30', 'w-[76px]'],
  ['FTSEMIB  8 Giorni', 'w-[97px]'],
  ['STOXX-FTSEMIB sito', 'w-[115px]'],
  ['PERCENTUALE', 'w-[87px]'],
  ['C164_3_Int', 'w-[63px]'],
  ['ZONE STOX', 'w-[66px]'],
  ['ZONE FTSEMIB', 'w-[87px]'],
];

const TabRow = () => (
  <div className="flex h-[18px] border-t border-black bg-[#f0f0f0] text-[11.7px] leading-[17px] text-[#111]">
    <div className="flex">
      {NAV.map(d => (
        <svg key={d} width="16" height="17" viewBox="0 0 16 13" className="border-r border-[#c0c0c0]"><path d={d} fill="#888" stroke="#888" /></svg>
      ))}
    </div>
    <div className="relative flex items-stretch whitespace-pre border-b border-black pl-[2px] pr-[12px]">
      <svg className="shrink-0" width="14" height="17" viewBox="0 0 14 17" fill="none" stroke="#111"><path d="M2 0L8 17" /></svg>
      {TABS.map(([t, w], i) => (
        <React.Fragment key={t}>
          {i === 8
            ? <span className={`${w} bg-white text-[11.3px] font-bold text-black`}>{t}</span>
            : <span className={w}>{t}</span>}
          {i < TABS.length - 1 && <TabGap kind={i === 7 ? 'toActive' : i === 8 ? 'fromActive' : 'plain'} />}
        </React.Fragment>
      ))}
      <svg className="absolute right-0 top-0" width="12" height="17" viewBox="0 0 12 17" fill="none" stroke="#111"><path d="M4 17L10 0" /></svg>
    </div>
  </div>
);

const Field = ({ w, children, green }: { w: string; children?: React.ReactNode; green?: boolean }) => (
  <div className={`${w} h-full border-l border-[#d8d8d8] pl-[4px] ${green ? 'tracking-[0.3px] text-[#0a8a0a]' : ''}`}>{children}</div>
);

const StatusBar = () => (
  <div className="flex h-[22px] whitespace-nowrap border-b-2 border-[#5f7a94] bg-[#f0f0f0] font-['Open_Sans',sans-serif] text-[14px] leading-[20px] text-[#111]">
    <div className="w-[1096px] pl-[3px]">For Help, press F1</div>
    <div className="w-[47px]">Acct:</div>
    <Field w="w-[91px]">Open Psns:</Field>
    <Field w="w-[64px]">DT BP:</Field>
    <Field w="w-[87px]">Purch Pwr:</Field>
    <Field w="w-[92px]">Closed P/L:</Field>
    <Field w="w-[60px]">RT TE:</Field>
    <Field w="w-[84px]">Open P/L:</Field>
    <Field w="w-[88px]" green>ORDER BAR</Field>
    <Field w="w-[68px]" green>MACROS</Field>
    <Field w="w-[19px]">
      <div className="mt-[3px] h-[11px] w-[11px] rounded-full bg-[radial-gradient(circle_at_35%_30%,#ff9090,#e00000_55%,#800000)]" />
    </Field>
    <Field w="w-[124px]">13/02/2024 08:35</Field>
  </div>
);

export default function App() {
  return (
    <div className="flex h-[1080px] w-[1920px] flex-col overflow-hidden bg-[#f0f0f0] font-['Liberation_Sans',sans-serif]">
      <TitleBar />
      <MenuBar />
      <Toolbar />
      <div className="flex flex-col bg-[#020207]">
        <div className="flex">
          <div className="relative w-[1853px]">
            <Chart />
            <Legend />
            <div className="absolute right-[1px] top-[580px] text-[20px] leading-none text-[#800080]">30010.000</div>
            <div className="absolute left-[3px] top-[606px] flex text-[16px] leading-[18px]">
              <span className="w-[49px] text-white">DMI</span>
              <span className="w-[49px] text-[#00ff00]">30.18</span>
              <span className="text-[#ff00ff]">20.53</span>
            </div>
          </div>
          <Axis />
          <div className="w-[2px] bg-[#cfd2d6]" />
        </div>
        <DateAxis />
      </div>
      <ScrollRow />
      <TabRow />
      <StatusBar />
    </div>
  );
}
